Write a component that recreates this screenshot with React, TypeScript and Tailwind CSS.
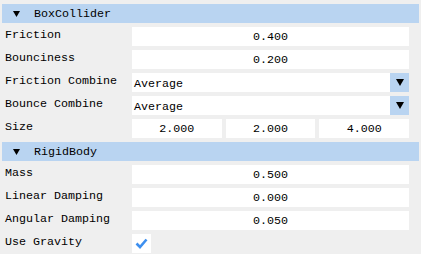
import React from "react";

const font = { fontFamily: '"Liberation Mono", "DejaVu Sans Mono", monospace' };

function Tri({ w = 7, h = 6 }: { w?: number; h?: number }) {
  return (
    <svg width={w} height={h} viewBox={`0 0 ${w} ${h}`}>
      <polygon points={`0,0 ${w},0 ${w / 2},${h}`} fill="#000" />
    </svg>
  );
}

function Header({ title }: { title: string }) {
  return (
    <div className="flex h-[19px] items-center bg-[#b9d4f1] pl-[11px]">
      <Tri />
      <span className="ml-[14px] leading-[20px]">{title}</span>
    </div>
  );
}

function Row({ label, children }: { label: string; children: React.ReactNode }) {
  return (
    <div className="flex h-[19px] pl-[3px] pr-[10px]">
      <div className="w-[127px] shrink-0 leading-[17px]">{label}</div>
      <div className="flex flex-1 gap-[4px]">{children}</div>
    </div>
  );
}

function Num({ v }: { v: string }) {
  return (
    <div className="flex-1 bg-white text-center leading-[21px]">{v}</div>
  );
}

function Combo({ v }: { v: string }) {
  return (
    <div className="flex flex-1 bg-white">
      <div className="flex-1 pl-[2px] leading-[23px]">{v}</div>
      <div className="flex h-[19px] w-[19px] items-center justify-center bg-[#b9d4f1]">
        <Tri w={8} h={7} />
      </div>
    </div>
  );
}

export default function App() {
  return (
    <div
      className="flex h-[254px] w-[421px] flex-col gap-[4px] bg-[#efefef] px-[2px] pt-[4px] text-[11.67px] text-black"
      style={font}
    >
      <Header title="BoxCollider" />
      <Row label="Friction"><Num v="0.400" /></Row>
      <Row label="Bounciness"><Num v="0.200" /></Row>
      <Row label="Friction Combine"><Combo v="Average" /></Row>
      <Row label="Bounce Combine"><Combo v="Average" /></Row>
      <Row label="Size">
        <Num v="2.000" />
        <Num v="2.000" />
        <Num v="4.000" />
      </Row>
      <Header title="RigidBody" />
      <Row label="Mass"><Num v="0.500" /></Row>
      <Row label="Linear Damping"><Num v="0.000" /></Row>
      <Row label="Angular Damping"><Num v="0.050" /></Row>
      <Row label="Use Gravity">
        <div className="flex h-[19px] w-[19px] items-center justify-center bg-white">
          <svg width="13" height="11" viewBox="0 0 13 11">
            <polyline points="1.5,5.5 5,9 11.5,1.5" fill="none" stroke="#3d8fef" strokeWidth="2.6" />
          </svg>
        </div>
      </Row>
    </div>
  );
}
